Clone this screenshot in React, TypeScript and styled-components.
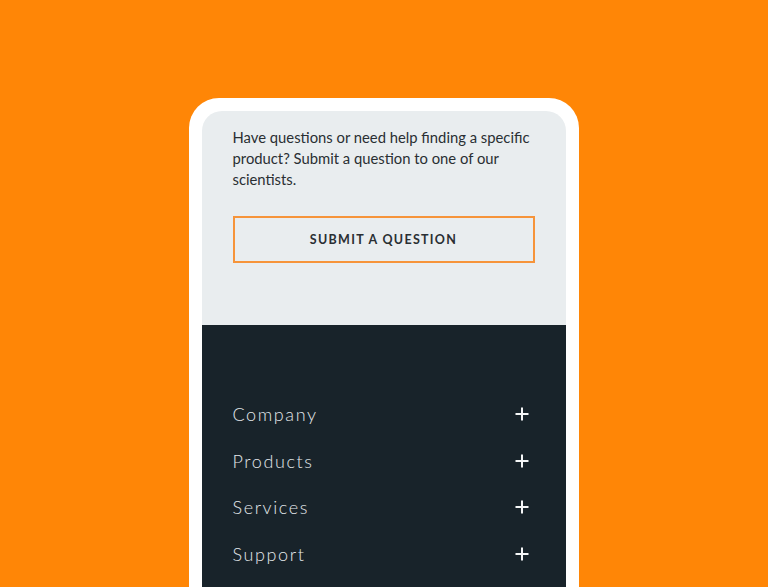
import React from 'react';
import styled, { createGlobalStyle } from 'styled-components';

const GlobalStyle = createGlobalStyle`
  html, body {
    margin: 0;
    padding: 0;
    background: #ff8606;
    height: 100%;
    overflow: hidden;
  }
  * {
    box-sizing: border-box;
  }
`;

const navItems = ['Company', 'Products', 'Services', 'Support'];

const PlusIcon = () => (
  <svg width="14" height="14" viewBox="0 0 14 14" fill="none">
    <path d="M7 0.5v13M0.5 7h13" stroke="#f4f6f7" strokeWidth="2" />
  </svg>
);

const App = () => {
  return (
    <>
      <GlobalStyle />
      <Page>
        <Phone>
          <Screen>
            <HelpSection>
              <HelpText>
                Have questions or need help finding a specific product? Submit
                a question to one of our scientists.
              </HelpText>
              <OutlineButton>SUBMIT A QUESTION</OutlineButton>
            </HelpSection>
            <FooterNav>
              {navItems.map((item) => (
                <NavRow key={item}>
                  <NavLabel>{item}</NavLabel>
                  <PlusIcon />
                </NavRow>
              ))}
            </FooterNav>
          </Screen>
        </Phone>
      </Page>
    </>
  );
};

const Page = styled.div`
  width: 768px;
  height: 587px;
  display: flex;
  justify-content: center;
  padding-top: 98px;
  padding-right: 1px;
  overflow: hidden;
`;

const Phone = styled.div`
  width: 390px;
  height: 489px;
  background: #ffffff;
  border-radius: 30px 30px 0 0;
  padding: 13px 13px 0;
  flex-shrink: 0;
`;

const Screen = styled.div`
  height: 100%;
  border-radius: 20px 20px 0 0;
  overflow: hidden;
  display: flex;
  flex-direction: column;
`;

const HelpSection = styled.section`
  flex: 0 0 214px;
  background: #e9edef;
  padding: 16px 31px 0;
`;

const HelpText = styled.p`
  margin: 0;
  font-family: Lato, 'Liberation Sans', sans-serif;
  font-size: 14.8px;
  line-height: 21px;
  color: #2a2f33;
`;

const OutlineButton = styled.button`
  display: block;
  width: 100%;
  height: 47px;
  margin-top: 26px;
  background: transparent;
  border: 2px solid #f6943a;
  font-family: Lato, 'Liberation Sans', sans-serif;
  font-weight: 700;
  font-size: 12.5px;
  letter-spacing: 1.3px;
  color: #2a2f33;
  cursor: pointer;
`;

const FooterNav = styled.nav`
  flex: 1 1 auto;
  min-height: 0;
  background: #18232a;
  padding: 66px 31px 0 31px;
`;

const NavRow = styled.div`
  display: flex;
  align-items: center;
  justify-content: space-between;
  height: 46.5px;
  padding-right: 6px;
`;

const NavLabel = styled.span`
  font-family: Lato, 'Liberation Sans', sans-serif;
  font-weight: 300;
  font-size: 18px;
  letter-spacing: 1.6px;
  color: #e3e7ea;
`;

export default App;
